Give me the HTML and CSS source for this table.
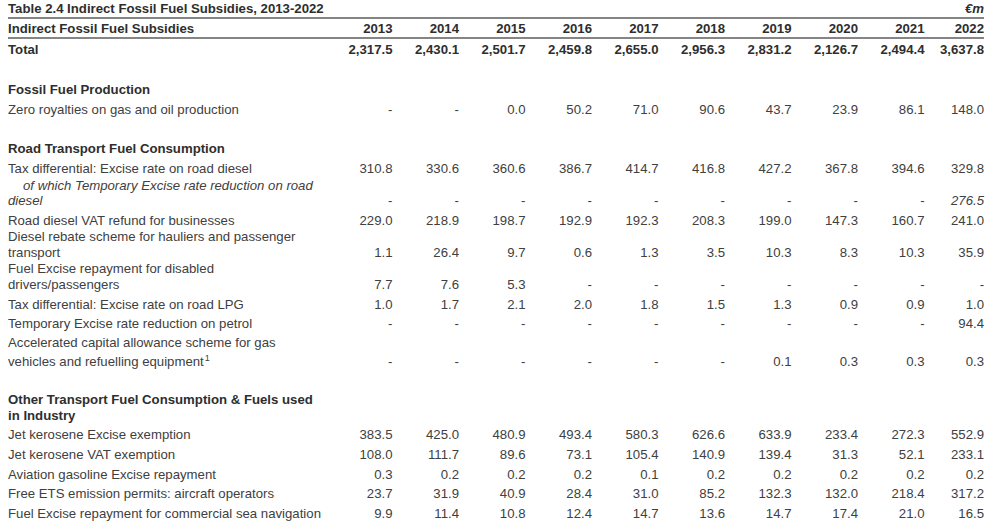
FILE: index.html
```html
<!DOCTYPE html>
<html lang="en">
<head>
<meta charset="utf-8">
<title>Table 2.4 Indirect Fossil Fuel Subsidies, 2013-2022</title>
<link rel="stylesheet" href="styles.css">
</head>
<body>
<div class="page">
<table class="tbl">
  <colgroup>
    <col class="c-label">
    <col class="c-yr"><col class="c-yr"><col class="c-yr"><col class="c-yr"><col class="c-yr">
    <col class="c-yr"><col class="c-yr"><col class="c-yr"><col class="c-yr">
    <col class="c-last">
  </colgroup>
  <tbody>
    <tr class="title-row">
      <td colspan="10" class="title">Table 2.4 Indirect Fossil Fuel Subsidies, 2013-2022</td>
      <td class="num unit">€m</td>
    </tr>
    <tr class="head-row">
      <td class="lbl">Indirect Fossil Fuel Subsidies</td>
      <td class="num">2013</td><td class="num">2014</td><td class="num">2015</td><td class="num">2016</td><td class="num">2017</td>
      <td class="num">2018</td><td class="num">2019</td><td class="num">2020</td><td class="num">2021</td><td class="num">2022</td>
    </tr>
    <tr class="row total">
      <td class="lbl">Total</td>
      <td class="num">2,317.5</td><td class="num">2,430.1</td><td class="num">2,501.7</td><td class="num">2,459.8</td><td class="num">2,655.0</td>
      <td class="num">2,956.3</td><td class="num">2,831.2</td><td class="num">2,126.7</td><td class="num">2,494.4</td><td class="num">3,637.8</td>
    </tr>
    <tr class="row blank"><td colspan="11"></td></tr>
    <tr class="row section"><td class="lbl">Fossil Fuel Production</td><td colspan="10"></td></tr>
    <tr class="row">
      <td class="lbl">Zero royalties on gas and oil production</td>
      <td class="num">-</td><td class="num">-</td><td class="num">0.0</td><td class="num">50.2</td><td class="num">71.0</td>
      <td class="num">90.6</td><td class="num">43.7</td><td class="num">23.9</td><td class="num">86.1</td><td class="num">148.0</td>
    </tr>
    <tr class="row blank"><td colspan="11"></td></tr>
    <tr class="row section"><td class="lbl">Road Transport Fuel Consumption</td><td colspan="10"></td></tr>
    <tr class="row">
      <td class="lbl">Tax differential: Excise rate on road diesel</td>
      <td class="num">310.8</td><td class="num">330.6</td><td class="num">360.6</td><td class="num">386.7</td><td class="num">414.7</td>
      <td class="num">416.8</td><td class="num">427.2</td><td class="num">367.8</td><td class="num">394.6</td><td class="num">329.8</td>
    </tr>
    <tr class="row sub">
      <td class="lbl sub-lbl">of which Temporary Excise rate reduction on road diesel</td>
      <td class="num">-</td><td class="num">-</td><td class="num">-</td><td class="num">-</td><td class="num">-</td>
      <td class="num">-</td><td class="num">-</td><td class="num">-</td><td class="num">-</td><td class="num em">276.5</td>
    </tr>
    <tr class="row">
      <td class="lbl">Road diesel VAT refund for businesses</td>
      <td class="num">229.0</td><td class="num">218.9</td><td class="num">198.7</td><td class="num">192.9</td><td class="num">192.3</td>
      <td class="num">208.3</td><td class="num">199.0</td><td class="num">147.3</td><td class="num">160.7</td><td class="num">241.0</td>
    </tr>
    <tr class="row">
      <td class="lbl">Diesel rebate scheme for hauliers and passenger transport</td>
      <td class="num">1.1</td><td class="num">26.4</td><td class="num">9.7</td><td class="num">0.6</td><td class="num">1.3</td>
      <td class="num">3.5</td><td class="num">10.3</td><td class="num">8.3</td><td class="num">10.3</td><td class="num">35.9</td>
    </tr>
    <tr class="row">
      <td class="lbl">Fuel Excise repayment for disabled drivers/passengers</td>
      <td class="num">7.7</td><td class="num">7.6</td><td class="num">5.3</td><td class="num">-</td><td class="num">-</td>
      <td class="num">-</td><td class="num">-</td><td class="num">-</td><td class="num">-</td><td class="num">-</td>
    </tr>
    <tr class="row">
      <td class="lbl">Tax differential: Excise rate on road LPG</td>
      <td class="num">1.0</td><td class="num">1.7</td><td class="num">2.1</td><td class="num">2.0</td><td class="num">1.8</td>
      <td class="num">1.5</td><td class="num">1.3</td><td class="num">0.9</td><td class="num">0.9</td><td class="num">1.0</td>
    </tr>
    <tr class="row">
      <td class="lbl">Temporary Excise rate reduction on petrol</td>
      <td class="num">-</td><td class="num">-</td><td class="num">-</td><td class="num">-</td><td class="num">-</td>
      <td class="num">-</td><td class="num">-</td><td class="num">-</td><td class="num">-</td><td class="num">94.4</td>
    </tr>
    <tr class="row acc">
      <td class="lbl">Accelerated capital allowance scheme for gas vehicles and refuelling equipment<sup class="fn">1</sup></td>
      <td class="num">-</td><td class="num">-</td><td class="num">-</td><td class="num">-</td><td class="num">-</td>
      <td class="num">-</td><td class="num">0.1</td><td class="num">0.3</td><td class="num">0.3</td><td class="num">0.3</td>
    </tr>
    <tr class="row blank"><td colspan="11"></td></tr>
    <tr class="row section other"><td class="lbl">Other Transport Fuel Consumption &amp; Fuels used in Industry</td><td colspan="10"></td></tr>
    <tr class="row">
      <td class="lbl">Jet kerosene Excise exemption</td>
      <td class="num">383.5</td><td class="num">425.0</td><td class="num">480.9</td><td class="num">493.4</td><td class="num">580.3</td>
      <td class="num">626.6</td><td class="num">633.9</td><td class="num">233.4</td><td class="num">272.3</td><td class="num">552.9</td>
    </tr>
    <tr class="row">
      <td class="lbl">Jet kerosene VAT exemption</td>
      <td class="num">108.0</td><td class="num">111.7</td><td class="num">89.6</td><td class="num">73.1</td><td class="num">105.4</td>
      <td class="num">140.9</td><td class="num">139.4</td><td class="num">31.3</td><td class="num">52.1</td><td class="num">233.1</td>
    </tr>
    <tr class="row">
      <td class="lbl">Aviation gasoline Excise repayment</td>
      <td class="num">0.3</td><td class="num">0.2</td><td class="num">0.2</td><td class="num">0.2</td><td class="num">0.1</td>
      <td class="num">0.2</td><td class="num">0.2</td><td class="num">0.2</td><td class="num">0.2</td><td class="num">0.2</td>
    </tr>
    <tr class="row">
      <td class="lbl">Free ETS emission permits: aircraft operators</td>
      <td class="num">23.7</td><td class="num">31.9</td><td class="num">40.9</td><td class="num">28.4</td><td class="num">31.0</td>
      <td class="num">85.2</td><td class="num">132.3</td><td class="num">132.0</td><td class="num">218.4</td><td class="num">317.2</td>
    </tr>
    <tr class="row">
      <td class="lbl">Fuel Excise repayment for commercial sea navigation</td>
      <td class="num">9.9</td><td class="num">11.4</td><td class="num">10.8</td><td class="num">12.4</td><td class="num">14.7</td>
      <td class="num">13.6</td><td class="num">14.7</td><td class="num">17.4</td><td class="num">21.0</td><td class="num">16.5</td>
    </tr>
  </tbody>
</table>
</div>
</body>
</html>
```

FILE: styles.css
```css
html, body {
  margin: 0;
  padding: 0;
  background: #ffffff;
}

.page {
  padding: 0 8px;
  font-family: "Liberation Sans", Arial, sans-serif;
  font-size: 13.2px;
  color: #404040;
}

.tbl {
  table-layout: fixed;
  width: 976px;
  border-collapse: separate;
  border-spacing: 0;
}

.c-label { width: 318px; }
.c-yr { width: 66.5px; }
.c-last { width: 59.5px; }

.tbl td {
  padding: 0 0 1px 0;
  line-height: 15.5px;
  vertical-align: bottom;
}

.tbl td.lbl {
  padding-right: 2px;
}

.num {
  text-align: right;
  white-space: nowrap;
}

.title-row { height: 19px; }
.title-row td {
  border-bottom: 2px solid #858585;
  font-weight: bold;
  color: #2e2e2e;
  white-space: nowrap;
  padding-bottom: 0.5px;
}
.unit { font-style: italic; }

.head-row { height: 20px; }
.head-row td {
  border-bottom: 2px solid #858585;
  font-weight: bold;
  color: #2e2e2e;
  padding-bottom: 0.5px;
}

.row { height: 19.8px; }

.total td,
.section td {
  font-weight: bold;
  color: #2e2e2e;
}

.sub-lbl {
  font-style: italic;
  text-indent: 15px;
}
.em { font-style: italic; }

.acc { height: 39px; }
.acc td {
  line-height: 19.5px;
  padding-bottom: 0;
}
.fn {
  font-size: 9px;
  line-height: 0;
  vertical-align: 5px;
  padding-left: 1px;
}

.other { height: 32px; }
.other td { padding-bottom: 0.5px; }
```
